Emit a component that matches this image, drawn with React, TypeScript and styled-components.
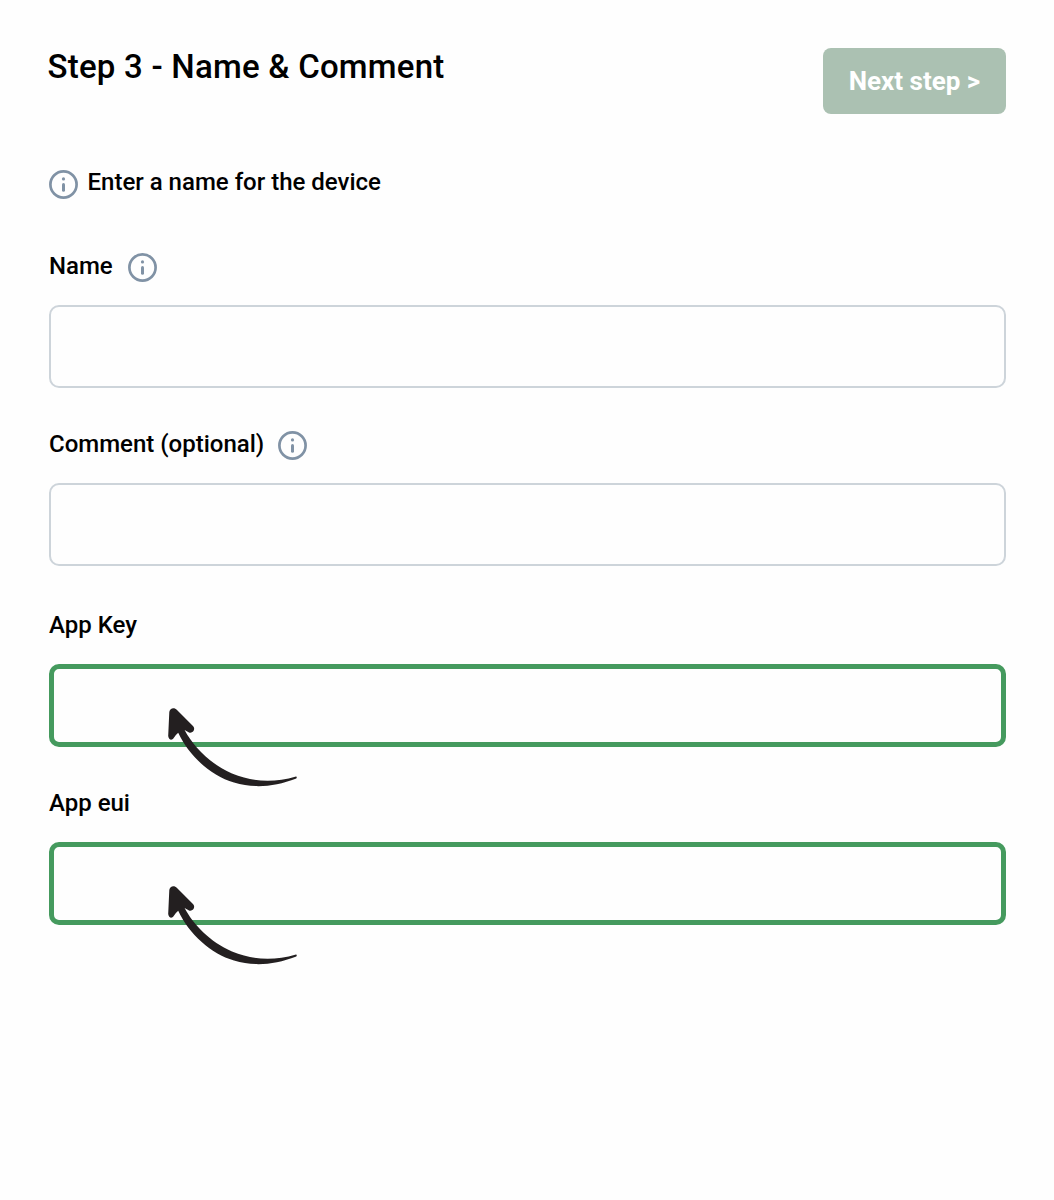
import React, { useId } from 'react';
import styled, { createGlobalStyle } from 'styled-components';

const GlobalStyle = createGlobalStyle`
  *, *::before, *::after { box-sizing: border-box; }
  body {
    margin: 0;
    background: #fefefe;
    color: #000;
    font-family: Roboto, "Liberation Sans", sans-serif;
    font-weight: 500;
  }
`;

const Page = styled.main`
  min-height: 1200px;
  padding: 48px 48px 0 49px;
`;

const Header = styled.header`
  display: flex;
  justify-content: space-between;
  align-items: flex-start;
`;

const Title = styled.h1`
  margin: 0 0 0 -1.5px;
  font-size: 33px;
  line-height: 38px;
  font-weight: 500;
  letter-spacing: 0.23px;
`;

const NextButton = styled.button`
  width: 183px;
  height: 66px;
  padding: 0;
  border: 0;
  border-radius: 8px;
  background: #abc1b2;
  color: #fff;
  font: 700 26px/30px Roboto, "Liberation Sans", sans-serif;
`;

const Hint = styled.p`
  display: flex;
  align-items: flex-start;
  gap: 9.5px;
  height: 34px;
  margin: 54px 0 50px;
  font-size: 24px;
  line-height: 28px;
`;

const HintIcon = styled.span`
  display: flex;
  padding-top: 2px;
`;

const Form = styled.form`
  display: flex;
  flex-direction: column;
`;

const Field = styled.div<{ $gap: number }>`
  display: flex;
  flex-direction: column;
  margin-bottom: ${(p) => p.$gap}px;
`;

const LabelRow = styled.div<{ $gap?: number }>`
  display: flex;
  align-items: flex-start;
  gap: ${(p) => p.$gap ?? 16}px;
  height: 53px;
  line-height: 28px;
  font-size: 24px;
`;

const LabelIcon = styled.span`
  display: flex;
  padding-top: 1px;
`;

const InfoSvg = styled.svg`
  display: block;
  flex: none;
`;

const InputWrap = styled.div`
  position: relative;
  height: 83px;
`;

const Input = styled.input<{ $highlighted?: boolean }>`
  display: block;
  width: 100%;
  height: 83px;
  padding: 0 24px;
  border: ${(p) => (p.$highlighted ? '5px solid #459a5e' : '2px solid #cdd4da')};
  border-radius: 10px;
  background: #fefefe;
  font: inherit;
  font-size: 24px;
  outline: none;
`;

const Arrow = styled.svg`
  position: absolute;
  left: 101px;
  top: 31px;
  pointer-events: none;
`;

function InfoIcon() {
  return (
    <InfoSvg width="29" height="29" viewBox="0 0 29 29" fill="none">
      <circle cx="14.5" cy="14.5" r="13.1" stroke="#8092a5" strokeWidth="2.7" />
      <circle cx="14.5" cy="8.9" r="1.6" fill="#8092a5" />
      <path d="M14.5 14.5v5.7" stroke="#8092a5" strokeWidth="3" strokeLinecap="round" />
    </InfoSvg>
  );
}

function PointerArrow() {
  return (
    <Arrow width="160" height="100" viewBox="0 0 160 100">
      <path
        fill="#231f20"
        d="M19.3 17 C19.8 13 24.4 12 27 15 L43.2 31.2 C45.8 34.2 42.8 38.7 39 37.4 L34.6 35 C43 51 60 69 82 78.5 C103 87 123 88.3 146 81.5 Q147.4 82 146.3 83.5 C124 92 104 93.5 84 87.5 C61 81 39 61 28.2 37.8 Q25.5 40 23.5 43.3 C21.5 46.2 18.6 44.4 18.2 41 Z"
      />
    </Arrow>
  );
}

interface FormFieldProps {
  label: string;
  gap: number;
  info?: boolean;
  iconGap?: number;
  highlighted?: boolean;
}

function FormField({ label, gap, info, iconGap, highlighted }: FormFieldProps) {
  const id = useId();
  return (
    <Field $gap={gap}>
      <LabelRow $gap={iconGap}>
        <label htmlFor={id}>{label}</label>
        {info && (
          <LabelIcon>
            <InfoIcon />
          </LabelIcon>
        )}
      </LabelRow>
      <InputWrap>
        <Input id={id} $highlighted={highlighted} />
        {highlighted && <PointerArrow />}
      </InputWrap>
    </Field>
  );
}

export default function App() {
  return (
    <>
      <GlobalStyle />
      <Page>
        <Header>
          <Title>Step 3 - Name &amp; Comment</Title>
          <NextButton type="button">Next step &gt;</NextButton>
        </Header>
        <Hint>
          <HintIcon>
            <InfoIcon />
          </HintIcon>
          Enter a name for the device
        </Hint>
        <Form>
          <FormField label="Name" gap={42} info iconGap={15} />
          <FormField label="Comment (optional)" gap={45} info iconGap={14} />
          <FormField label="App Key" gap={42} highlighted />
          <FormField label="App eui" gap={0} highlighted />
        </Form>
      </Page>
    </>
  );
}
